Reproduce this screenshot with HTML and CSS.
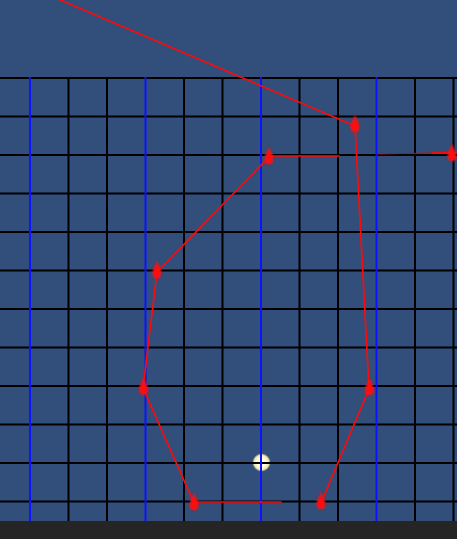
FILE: index.html
```html
<!DOCTYPE html>
<html>
<head>
<meta charset="utf-8">
<link rel="stylesheet" href="styles.css">
</head>
<body>
<div class="viewport">
  <svg class="scene" width="457" height="521" viewBox="0 0 457 521">
    <defs>
      <radialGradient id="glow">
        <stop offset="0" stop-color="#ffffff"/>
        <stop offset="0.5" stop-color="#fffbe6"/>
        <stop offset="0.8" stop-color="#f3eaa8"/>
        <stop offset="1" stop-color="#b9b67e" stop-opacity="0.5"/>
      </radialGradient>
      <filter id="soft" x="-60%" y="-60%" width="220%" height="220%">
        <feGaussianBlur stdDeviation="1"/>
      </filter>
      <path id="drop" d="M0,-12 C1,-7 4.5,-3.5 4.5,1.5 A4.5,5 0 0 1 -4.5,1.5 C-4.5,-3.5 -1,-7 0,-12 Z"/>
    </defs>

    <circle cx="261.5" cy="462.5" r="9" fill="url(#glow)"/>

    <g class="grid-h">
      <line x1="0" y1="78" x2="457" y2="78"/>
      <line x1="0" y1="116.5" x2="457" y2="116.5"/>
      <line x1="0" y1="155" x2="457" y2="155"/>
      <line x1="0" y1="193.5" x2="457" y2="193.5"/>
      <line x1="0" y1="232" x2="457" y2="232"/>
      <line x1="0" y1="270.5" x2="457" y2="270.5"/>
      <line x1="0" y1="309" x2="457" y2="309"/>
      <line x1="0" y1="347.5" x2="457" y2="347.5"/>
      <line x1="0" y1="386" x2="457" y2="386"/>
      <line x1="0" y1="424.5" x2="457" y2="424.5"/>
      <line x1="0" y1="463" x2="457" y2="463"/>
      <line x1="0" y1="501.5" x2="457" y2="501.5"/>
    </g>
    <g class="grid-v">
      <line x1="68.5" y1="77" x2="68.5" y2="521"/>
      <line x1="107" y1="77" x2="107" y2="521"/>
      <line x1="184" y1="77" x2="184" y2="521"/>
      <line x1="222.5" y1="77" x2="222.5" y2="521"/>
      <line x1="299.5" y1="77" x2="299.5" y2="521"/>
      <line x1="338" y1="77" x2="338" y2="521"/>
      <line x1="415" y1="77" x2="415" y2="521"/>
      <line x1="453.5" y1="77" x2="453.5" y2="521"/>
    </g>
    <g class="grid-major">
      <line x1="30" y1="77" x2="30" y2="521"/>
      <line x1="145.5" y1="77" x2="145.5" y2="521"/>
      <line x1="261" y1="77" x2="261" y2="521"/>
      <line x1="376.5" y1="77" x2="376.5" y2="521"/>
    </g>

    <g class="path">
      <line x1="58" y1="-1" x2="355" y2="126"/>
      <line x1="355" y1="126" x2="369" y2="389"/>
      <line x1="269" y1="156" x2="339" y2="156"/>
      <line x1="269" y1="157" x2="157" y2="272"/>
      <line x1="157" y1="272" x2="143" y2="388"/>
      <line x1="143" y1="388" x2="194" y2="503"/>
      <line x1="194" y1="502" x2="281" y2="502"/>
      <line x1="321" y1="503" x2="369" y2="389"/>
      <line class="faint" x1="378" y1="154" x2="432" y2="153"/>
      <line x1="432" y1="153" x2="452" y2="152.5"/>
    </g>

    <g class="markers" filter="url(#soft)">
      <use href="#drop" x="355" y="126"/>
      <use href="#drop" x="269" y="158"/>
      <use href="#drop" x="157" y="272"/>
      <use href="#drop" x="143.5" y="388.5"/>
      <use href="#drop" x="194" y="504"/>
      <use href="#drop" x="321" y="503"/>
      <use href="#drop" x="369.5" y="389"/>
      <use href="#drop" x="452" y="155"/>
    </g>
  </svg>
</div>
<div class="statusbar"></div>
</body>
</html>
```

FILE: styles.css
```css
html, body {
  margin: 0;
  padding: 0;
  width: 457px;
  height: 539px;
  overflow: hidden;
  background: #314f7a;
  font-family: "Liberation Sans", Arial, sans-serif;
}

.viewport {
  width: 457px;
  height: 521px;
  background: #314f7a;
  overflow: hidden;
}

.scene {
  display: block;
}

.grid-h line,
.grid-v line {
  stroke: #000000;
  stroke-width: 2;
}

.grid-major line {
  stroke: #0a14ff;
  stroke-width: 2;
}

.path line {
  stroke: #ff0a0a;
  stroke-width: 1.7;
  stroke-linecap: round;
}

.path line.faint {
  stroke: #c80a14;
  stroke-width: 1.2;
}

.markers use {
  fill: #ff1010;
}

.statusbar {
  height: 18px;
  background: #252525;
}
```
